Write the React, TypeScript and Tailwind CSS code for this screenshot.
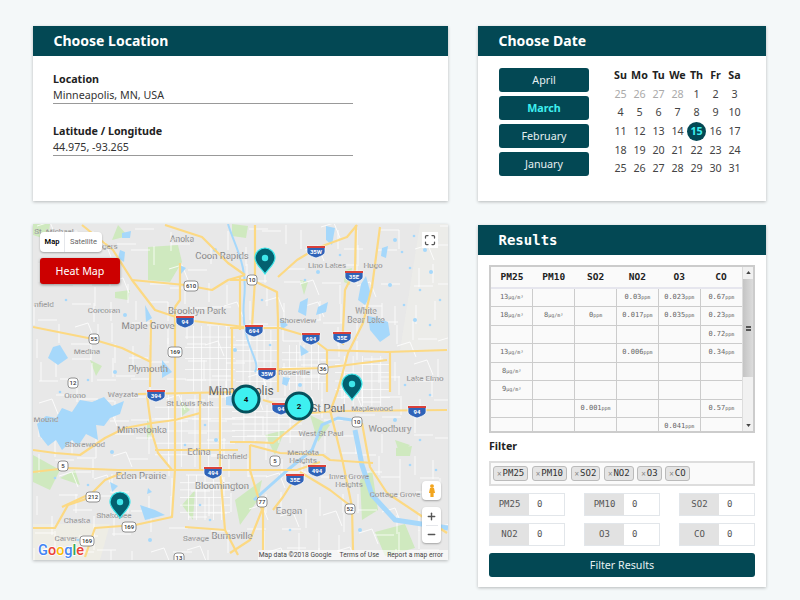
import { Maximize, Minus, Plus } from "lucide-react";

const MONO = "font-['DejaVu_Sans_Mono',monospace]";

const ROADS = [
  "M82 225L113 250L132 280L155 310L185 320L245 327",
  "M132 280L185 285L212 290L228 280L245 275",
  "M175 307V470L172 517L135 525L95 528L85 557",
  "M33 327L88 338L122 348L151 362",
  "M151 320L150 387",
  "M165 225L202 237L228 263L245 275",
  "M180 263V300L175 307",
  "M232 327V392",
  "M230 280H252L277 292L278 320V392",
  "M278 277L297 260L317 248L347 237L357 225",
  "M356 225L355 270L345 290L343 330V345",
  "M380 227L372 287L363 323L348 353L338 390L330 412",
  "M230 328H280L310 337L327 350L387 352L447 350",
  "M327 350V392",
  "M390 352V392",
  "M257 370L323 368L387 360",
  "M240 277V330",
  "M255 225V280L252 327",
  "M33 472L68 468L118 470L175 470L238 470L297 470L320 462",
  "M33 450L55 453L80 455L105 438L125 428L152 423L175 420L200 413",
  "M138 394L238 392",
  "M147 395L152 433L158 453L172 470",
  "M155 450H238",
  "M62 507L92 493L105 480L122 473",
  "M33 528H55L68 505L92 497",
  "M185 527L225 530L238 555",
  "M263 503V550",
  "M230 553L250 540L262 510L250 470V445",
  "M297 475L283 497L273 510",
  "M300 472L330 490L352 507L353 550",
  "M362 423L370 467L387 493L423 517L447 533",
  "M230 442H250L273 443L310 413",
  "M263 400L310 413L340 411L447 410",
  "M330 410L343 463L352 507",
  "M373 463L330 460L323 455L280 453L250 445",
  "M200 392V470",
  "M220 392V470",
  "M220 470L225 530",
];

const GRIDS = [
  [185, 326, 50, 65],
  [236, 330, 42, 62],
  [282, 345, 44, 45],
  [335, 356, 55, 50],
  [155, 395, 80, 72],
  [232, 405, 70, 38],
  [180, 475, 50, 45],
];

const PARKS = [
  "M148 247L178 245L182 262L170 282L148 280Z", "M33 224H50L48 240L33 235Z", "M232 224L248 226L246 238L232 236Z",
  "M115 292L130 290L128 300L115 298Z", "M90 360L102 366L96 376Z", "M310 415L330 425L318 442Z",
  "M265 435L285 430L275 455Z", "M33 455L60 470L50 490L33 482Z", "M60 478L75 470L80 485Z", "M182 505L195 490L193 520Z",
  "M147 420L155 430L147 440Z", "M235 500L262 480L258 500L240 525Z", "M395 440L410 445L400 455Z", "M118 225L128 236L112 240Z",
  "M396 448L412 446L410 456L396 456Z", "M360 480L372 470L378 510L362 520Z", "M375 532L405 524L415 548L385 556Z",
  "M180 400L190 410L182 416Z", "M345 270L352 268L350 285L344 282Z", "M300 280L308 282L304 295Z",
];

const LAKES = [
  "M37 424L46 416L56 418L62 408L72 412L80 400L92 402L104 397L112 406L124 401L120 414L110 418L104 426L96 425L98 440L86 434L78 446L72 440L62 450L56 440L48 446L40 436Z",
  "M53 347L60 345L68 358L58 365L48 358Z",
  "M120 250L125 252L124 262L118 258Z",
  "M122 233L131 231L130 238L122 238Z",
  "M368 316L378 318L388 322L390 335L380 342L370 330Z",
  "M361 284L366 276L371 295L365 305L358 300Z",
  "M300 302L308 298L306 316L298 312Z",
  "M318 307L328 302L326 312L316 315Z",
  "M326 226L335 228L332 245L326 240Z",
  "M382 248L388 246L386 258L381 256Z",
  "M283 377L290 378L287 386L282 384Z",
  "M226 397L234 395L233 406L226 405Z",
  "M110 482L118 486L112 492Z",
  "M140 505L155 510L165 515L145 520Z",
  "M148 488L152 492L147 494Z",
  "M280 318L288 325L281 330Z",
  "M300 345L309 352L301 356Z",
  "M180 265L186 268L181 274Z",
  "M162 360L172 372L162 378Z",
  "M145 305L152 318L146 322Z",
];

const PONDS = [
  [395, 240], [402, 252], [414, 236], [425, 250], [437, 240], [410, 268], [431, 272], [420, 290], [440, 300], [415, 320],
  [430, 325], [404, 305], [390, 285], [340, 255], [305, 280], [318, 272], [66, 300], [50, 265], [72, 272], [88, 380],
  [60, 392], [115, 372], [100, 400], [205, 425], [216, 440], [185, 445], [88, 485], [112, 452], [200, 505], [210, 520],
  [235, 350], [262, 300], [270, 345], [395, 420], [420, 440], [436, 470], [360, 530], [410, 465], [290, 530], [150, 540],
  [78, 540], [55, 478], [215, 250], [70, 240], [100, 310], [125, 315], [405, 385], [430, 395], [300, 385], [350, 395],
];

const LABELS: [string, number, number, number?][] = [
  ["St. Michael", 54, 234, 8], ["Anoka", 182, 242, 8.5], ["Coon Rapids", 222, 259, 9.5], ["Brooklyn Park", 197, 314, 9.5],
  ["Corcoran", 104, 313, 8], ["Maple Grove", 148, 329, 9.5], ["Medina", 87, 354, 8], ["Plymouth", 148, 372, 9.5],
  ["Rogers", 105, 249, 8], ["nfield", 44, 307, 8], ["Lino Lakes", 327, 268, 8], ["Hugo", 373, 268, 8],
  ["Shoreview", 298, 323, 8], ["White", 366, 314, 8.5], ["Bear Lake", 366, 323, 8.5], ["Roseville", 294, 375, 8],
  ["Lake Elmo", 425, 381, 8], ["Orono", 75, 398, 8], ["Wayzata", 123, 397, 8], ["St Louis Park", 190, 406, 8],
  ["Mound", 46, 422, 8], ["Minnetonka", 142, 433, 9.5], ["Shorewood", 85, 447, 8], ["Edina", 199, 455, 9.5],
  ["Richfield", 232, 459, 8], ["Eden Prairie", 141, 479, 9.5], ["Bloomington", 222, 489, 9.5], ["Shakopee", 114, 518, 8],
  ["Chaska", 77, 523, 8], ["Carver", 66, 541, 8], ["Savage", 196, 541, 8], ["Burnsville", 232, 539, 9.5],
  ["Maplewood", 372, 411, 8], ["St Paul", 328, 412, 11], ["Woodbury", 390, 432, 9.5], ["West St Paul", 321, 436, 8],
  ["Mendota", 303, 455, 8], ["Heights", 303, 463, 8], ["Inver Grove", 349, 479, 8], ["Heights", 349, 487, 8],
  ["Cottage Grove", 395, 497, 8], ["Eagan", 289, 514, 9.5], ["Minneapolis", 241, 395, 12],
];

const INTERSTATES: [string, number, number][] = [
  ["94", 185, 321], ["35W", 316, 251], ["35E", 354, 276], ["694", 254, 330], ["694", 311, 338], ["35E", 342, 337],
  ["35W", 267, 373], ["394", 156, 395], ["494", 213, 472], ["94", 281, 408], ["94", 417, 411], ["494", 317, 470], ["35E", 295, 479],
];

const SHIELDS: [string, number, number][] = [
  ["610", 191, 286], ["55", 94, 339], ["169", 175, 352], ["12", 73, 383], ["10", 252, 280], ["36", 323, 369], ["5", 63, 466],
  ["212", 93, 497], ["169", 129, 527], ["169", 87, 541], ["10", 357, 422], ["5", 275, 461], ["77", 262, 502], ["52", 350, 509], ["13", 179, 558],
];

// township roads: blocky white segments on a loose grid
function townshipRoads() {
  const out: string[] = [];
  let seed = 17;
  const rnd = () => {
    seed = (seed * 1103515245 + 12345) % 2147483648;
    return seed / 2147483648;
  };
  for (let x = 33; x < 448; x += 19) {
    for (let y = 224; y < 560; y += 19) {
      const r = rnd();
      const dx = Math.round(rnd() * 8);
      const dy = Math.round(rnd() * 8);
      if (r < 0.36) out.push(`M${x + dx} ${y + dy}h19`);
      else if (r < 0.72) out.push(`M${x + dx} ${y + dy}v19`);
      else if (r < 0.82) out.push(`M${x + dx} ${y + dy}l13 -4l6 15`);
    }
  }
  return out;
}

const TOWNSHIP = townshipRoads();

function Pin({ x, top }: { x: number; top: number }) {
  return (
    <g transform={`translate(${x} ${top})`}>
      <path d="M0 25C-3 20-10 15-10 9C-10 3-5 -1 0 -1C5 -1 10 3 10 9C10 15 3 20 0 25Z" fill="#03606f" stroke="#3fe6ea" strokeWidth="1.2" />
      <circle cx="0" cy="9" r="3.2" fill="#3fe6ea" />
    </g>
  );
}

function Cluster({ x, y, n }: { x: number; y: number; n: string }) {
  return (
    <g>
      <circle cx={x} cy={y} r="13" fill="#3ef0f0" stroke="#04505c" strokeWidth="3" />
      <text x={x} y={y + 3} textAnchor="middle" fontSize="8" fontWeight="700" fill="#111">{n}</text>
    </g>
  );
}

function MapDrawing() {
  return (
    <svg viewBox="33 224 415 336" className="block w-full h-full font-['Roboto',sans-serif]">
      <rect x="33" y="224" width="415" height="336" fill="#e8e8e8" />
      {PARKS.map((d, i) => <path key={i} d={d} fill="#cfe9bf" />)}
      <path d="M33 524H110L100 560H33Z" fill="#f1efe4" opacity="0.7" />
      <path d="M420 224H448V350H400Z" fill="#efefea" opacity="0.6" />
      {TOWNSHIP.map((d, i) => <path key={i} d={d} fill="none" stroke="#fff" strokeWidth="0.8" />)}
      {GRIDS.map(([x, y, w, h], i) => (
        <g key={i} stroke="#fff" strokeWidth="0.7">
          {[0.17, 0.33, 0.5, 0.67, 0.83].map((t) => <line key={t} x1={x + w * t} y1={y} x2={x + w * t} y2={y + h} />)}
          {[0.17, 0.33, 0.5, 0.67, 0.83].map((t) => <line key={t} x1={x} y1={y + h * t} x2={x + w} y2={y + h * t} />)}
        </g>
      ))}
      {LAKES.map((d, i) => <path key={i} d={d} fill="#a6d8fb" />)}
      {PONDS.map(([x, y], i) => <circle key={i} cx={x} cy={y} r={i % 3 === 0 ? 2 : 1.3} fill="#a6d8fb" />)}
      <path d="M228 224C236 250 248 265 244 300C240 345 262 360 255 372" fill="none" stroke="#a6d8fb" strokeWidth="2" />
      <path d="M254 500L290 468L312 450L322 425L338 418L352 420" fill="none" stroke="#a6d8fb" strokeWidth="3" />
      <path d="M355 430L362 465L372 495L395 520L448 528" fill="none" stroke="#a6d8fb" strokeWidth="5" />
      {ROADS.map((d, i) => <path key={i} d={d} fill="none" stroke="#fcd983" strokeWidth="2.2" strokeLinejoin="round" />)}
      {LABELS.map(([t, x, y, size], i) => (
        <text key={i} x={x} y={y} textAnchor="middle" fontSize={size} fill={size === 12 || size === 11 ? "#333" : "#5a5a5a"} stroke="#f2f2f2" strokeWidth="0.2">{t}</text>
      ))}
      {INTERSTATES.map(([t, x, y], i) => (
        <g key={i}>
          <path d={`M${x - 9} ${y - 5}H${x + 9}V${y + 1}C${x + 9} ${y + 4} ${x + 3} ${y + 6} ${x} ${y + 7}C${x - 3} ${y + 6} ${x - 9} ${y + 4} ${x - 9} ${y + 1}Z`} fill="#2f63b8" stroke="#fff" strokeWidth="0.7" />
          <rect x={x - 9} y={y - 5} width="18" height="2" fill="#d9403a" />
          <text x={x} y={y + 2.5} textAnchor="middle" fontSize="6" fontWeight="700" fill="#fff">{t}</text>
        </g>
      ))}
      {SHIELDS.map(([t, x, y], i) => (
        <g key={i}>
          <rect x={x - (t.length > 2 ? 7 : 5)} y={y - 5} width={t.length > 2 ? 14 : 10} height="10" rx="3" fill="#fff" stroke="#777" strokeWidth="0.8" />
          <text x={x} y={y + 2.2} textAnchor="middle" fontSize="6" fontWeight="500" fill="#333">{t}</text>
        </g>
      ))}
      <Pin x={265} top={249} />
      <Pin x={352} top={375} />
      <Pin x={120} top={493} />
      <Cluster x={246} y={399} n="4" />
      <Cluster x={299} y={406} n="2" />
      <text x="38" y="555" fontSize="14.5" fontWeight="500" stroke="#fff" strokeWidth="1.5" paintOrder="stroke">
        <tspan fill="#4285f4">G</tspan><tspan fill="#ea4335">o</tspan><tspan fill="#fbbc05">o</tspan><tspan fill="#4285f4">g</tspan><tspan fill="#34a853">l</tspan><tspan fill="#ea4335">e</tspan>
      </text>
    </svg>
  );
}

function MapCard() {
  return (
    <div className="relative w-[415px] h-[336px] shadow-[0_1px_3px_rgba(0,0,0,0.25)] overflow-hidden font-['Roboto',sans-serif]">
      <MapDrawing />
      <div className="absolute left-[7px] top-[8px] flex h-5 w-[62px] bg-white text-[7.5px] rounded-sm shadow-[0_1px_2px_rgba(0,0,0,0.3)]">
        <span className="flex w-[25px] items-center justify-center font-semibold text-black border-r border-gray-200">Map</span>
        <span className="flex flex-1 items-center justify-center text-[#666]">Satellite</span>
      </div>
      <button className="absolute left-[7px] top-[34px] h-[26px] w-[80px] rounded-[3px] bg-[#cc0000] text-white text-[10.7px] font-['Noto_Sans',sans-serif] shadow-[0_1px_3px_rgba(0,0,0,0.4)]">
        Heat Map
      </button>
      <div className="absolute left-[389px] top-[8px] flex h-4 w-4 items-center justify-center bg-white text-[#555]">
        <Maximize size={12} strokeWidth={2.5} />
      </div>
      <div className="absolute left-[389px] top-[257px] flex h-[19px] w-[19px] items-center justify-center bg-white rounded-sm shadow-[0_1px_2px_rgba(0,0,0,0.3)]">
        <svg viewBox="0 0 10 16" className="h-[13px] w-[8px]">
          <circle cx="5" cy="2.5" r="2.4" fill="#f2a51f" />
          <path d="M2.5 5H7.5L8.8 11H7V16H3V11H1.2Z" fill="#f2a51f" />
        </svg>
      </div>
      <div className="absolute left-[389px] top-[283px] flex h-[36px] w-[19px] flex-col items-center bg-white rounded-sm text-[#555] shadow-[0_1px_2px_rgba(0,0,0,0.3)]">
        <span className="flex h-[18px] items-center"><Plus size={11} strokeWidth={3} /></span>
        <span className="h-px w-3 bg-gray-200" />
        <span className="flex h-[17px] items-center"><Minus size={11} strokeWidth={3} /></span>
      </div>
      <div className="absolute right-0 bottom-0 flex h-[10px] w-[190px] items-center justify-end gap-[8px] bg-white/60 pr-[5px] text-[6.7px] text-[#444] whitespace-nowrap">
        <span>Map data ©2018 Google</span>
        <span>Terms of Use</span>
        <span>Report a map error</span>
      </div>
    </div>
  );
}

function CardHeader({ title, mono }: { title: string; mono?: boolean }) {
  return (
    <div className={`flex h-[30px] items-center bg-[#034854] pl-[20.5px] font-bold text-white text-sm ${mono ? MONO : ""}`}>
      {title}
    </div>
  );
}

function Field({ label, value }: { label: string; value: string }) {
  return (
    <div className="w-[300px]">
      <div className="text-[10.7px] font-bold leading-[16px] text-[#222]">{label}</div>
      <div className="border-b-[1.5px] border-[#999] text-[10.7px] leading-[16px] text-[#333]">{value}</div>
    </div>
  );
}

const MONTHS = ["April", "March", "February", "January"];
const DAYS = ["Su", "Mo", "Tu", "We", "Th", "Fr", "Sa"];
const CAL = [25, 26, 27, 28, 1, 2, 3, 4, 5, 6, 7, 8, 9, 10, 11, 12, 13, 14, 15, 16, 17, 18, 19, 20, 21, 22, 23, 24, 25, 26, 27, 28, 29, 30, 31];

function Calendar() {
  return (
    <div className="grid grid-cols-[repeat(7,19px)] auto-rows-[18.7px] text-[10.7px] text-[#444] leading-none">
      {DAYS.map((d) => (
        <span key={d} className="flex items-center justify-center font-bold text-[#222]">{d}</span>
      ))}
      {CAL.map((d, i) => (
        <span key={i} className={`flex items-center justify-center ${i < 4 ? "text-[#aaa]" : ""}`}>
          {d === 15 ? (
            <span className="flex h-[19px] w-[19px] shrink-0 items-center justify-center rounded-full bg-[#034854] font-bold text-[#3ef0f0]">15</span>
          ) : d}
        </span>
      ))}
    </div>
  );
}

const ROWS: string[][] = [
  ["13µg/m³", "", "", "0.03ppm", "0.023ppm", "0.67ppm"],
  ["18µg/m³", "8µg/m³", "0ppm", "0.017ppm", "0.035ppm", "0.23ppm"],
  ["", "", "", "", "", "0.72ppm"],
  ["13µg/m³", "", "", "0.006ppm", "", "0.34ppm"],
  ["8µg/m³", "", "", "", "", ""],
  ["9µg/m³", "", "", "", "", ""],
  ["", "", "0.001ppm", "", "", "0.57ppm"],
  ["", "", "", "", "0.041ppm", ""],
];

function Reading({ value }: { value: string }) {
  const m = value.match(/^([\d.]+)(.*)$/);
  if (!m) return null;
  return (
    <>
      {m[1]}
      <span className="text-[5px]">{m[2]}</span>
    </>
  );
}

function ResultsTable() {
  return (
    <div className="flex h-[168px] w-[266px] border-2 border-[#ccc] bg-[#fafafa] overflow-hidden">
      <table className={`w-[253px] table-fixed border-collapse self-start ${MONO}`}>
        <thead>
          <tr className="h-[21px] border-b-2 border-[#e6e6ee]">
            {["PM25", "PM10", "SO2", "NO2", "O3", "CO"].map((h) => (
              <th key={h} className="text-[9.5px] font-bold text-[#222]">{h}</th>
            ))}
          </tr>
        </thead>
        <tbody>
          {ROWS.map((r, i) => (
            <tr key={i} className="h-[18.5px]">
              {r.map((c, j) => (
                <td key={j} className="border border-[#ccc] border-l-0 text-center text-[7px] leading-none text-[#666] p-0 last:border-r-0">
                  <Reading value={c} />
                </td>
              ))}
            </tr>
          ))}
        </tbody>
      </table>
      <div className="flex w-[11px] flex-col items-center border-l border-[#ddd] bg-[#f1f1f1]">
        <svg viewBox="0 0 6 4" className="mt-1 h-[3px] w-[5px]"><path d="M3 0L6 4H0Z" fill="#444" /></svg>
        <div className="mt-[5px] flex h-[98px] w-[10px] items-center justify-center bg-gradient-to-r from-[#c4c4c4] to-[#dcdcdc]">
          <div className="h-[5px] w-[5px] border-y-2 border-double border-[#555]" />
        </div>
        <svg viewBox="0 0 6 4" className="mb-1 mt-auto h-[3px] w-[5px]"><path d="M3 4L6 0H0Z" fill="#444" /></svg>
      </div>
    </div>
  );
}

function Tag({ t }: { t: string }) {
  return (
    <span className="flex h-[15px] items-center gap-px rounded-[3px] border border-[#bbb] bg-[#e4e4e4] px-[3px] text-[9px] text-[#333]">
      <span className="text-[8px] text-[#888] font-['Noto_Sans',sans-serif]">×</span>{t}
    </span>
  );
}

function NumberBox({ label }: { label: string }) {
  return (
    <div className="flex h-[23px] w-[76px] border border-[#e2e6ea] text-[9px] text-[#555]">
      <span className="flex w-[39px] items-center justify-center bg-[#e2e2e2]">{label}</span>
      <span className="flex flex-1 items-center bg-white pl-2">0</span>
    </div>
  );
}

export default function App() {
  return (
    <div className="flex h-[600px] w-[800px] gap-[30px] overflow-hidden bg-[#f4f8f9] pl-[33px] pt-[26px] font-['Noto_Sans',sans-serif]">
      <div className="flex w-[415px] flex-col gap-[23px]">
        <section className="h-[175px] bg-white shadow-[0_1px_3px_rgba(0,0,0,0.25)]">
          <CardHeader title="Choose Location" />
          <div className="flex flex-col gap-[18.5px] pl-[20px] pt-[15px]">
            <Field label="Location" value="Minneapolis, MN, USA" />
            <Field label="Latitude / Longitude" value="44.975, -93.265" />
          </div>
        </section>
        <MapCard />
      </div>

      <div className="flex w-[288px] flex-col gap-[24px]">
        <section className="h-[175px] bg-white shadow-[0_1px_3px_rgba(0,0,0,0.25)]">
          <CardHeader title="Choose Date" />
          <div className="flex pl-[21px] pt-[12px]">
            <div className="flex w-[90px] flex-col gap-1">
              {MONTHS.map((m) => (
                <button key={m} className={`h-6 rounded-[3px] bg-[#034854] text-[10.7px] ${m === "March" ? "font-bold text-[#3ef0f0]" : "text-[#e6f0f2]"}`}>
                  {m}
                </button>
              ))}
            </div>
            <div className="ml-[22px] -mt-[2px]"><Calendar /></div>
          </div>
        </section>

        <section className="h-[362px] bg-white shadow-[0_1px_3px_rgba(0,0,0,0.25)]">
          <CardHeader title="Results" mono />
          <div className="px-[11px] pt-[10px]">
            <ResultsTable />
            <div className="mt-[5px] text-[10.7px] font-bold leading-[16px] text-[#222]">Filter</div>
            <div className={`mt-[7px] flex h-[25px] items-center gap-[3.5px] border-2 border-[#ddd] bg-[#fafafa] pl-[2px] ${MONO}`}>
              {["PM25", "PM10", "SO2", "NO2", "O3", "CO"].map((t) => <Tag key={t} t={t} />)}
            </div>
            <div className={`mt-[7px] grid grid-cols-3 gap-y-[7px] ${MONO}`}>
              <div><NumberBox label="PM25" /></div>
              <div className="flex justify-center"><NumberBox label="PM10" /></div>
              <div className="flex justify-end"><NumberBox label="SO2" /></div>
              <div><NumberBox label="NO2" /></div>
              <div className="flex justify-center"><NumberBox label="O3" /></div>
              <div className="flex justify-end"><NumberBox label="CO" /></div>
            </div>
            <button className="mt-[7px] h-6 w-full rounded-[3px] bg-[#034854] text-[10.7px] text-[#e6f0f2]">Filter Results</button>
          </div>
        </section>
      </div>
    </div>
  );
}
